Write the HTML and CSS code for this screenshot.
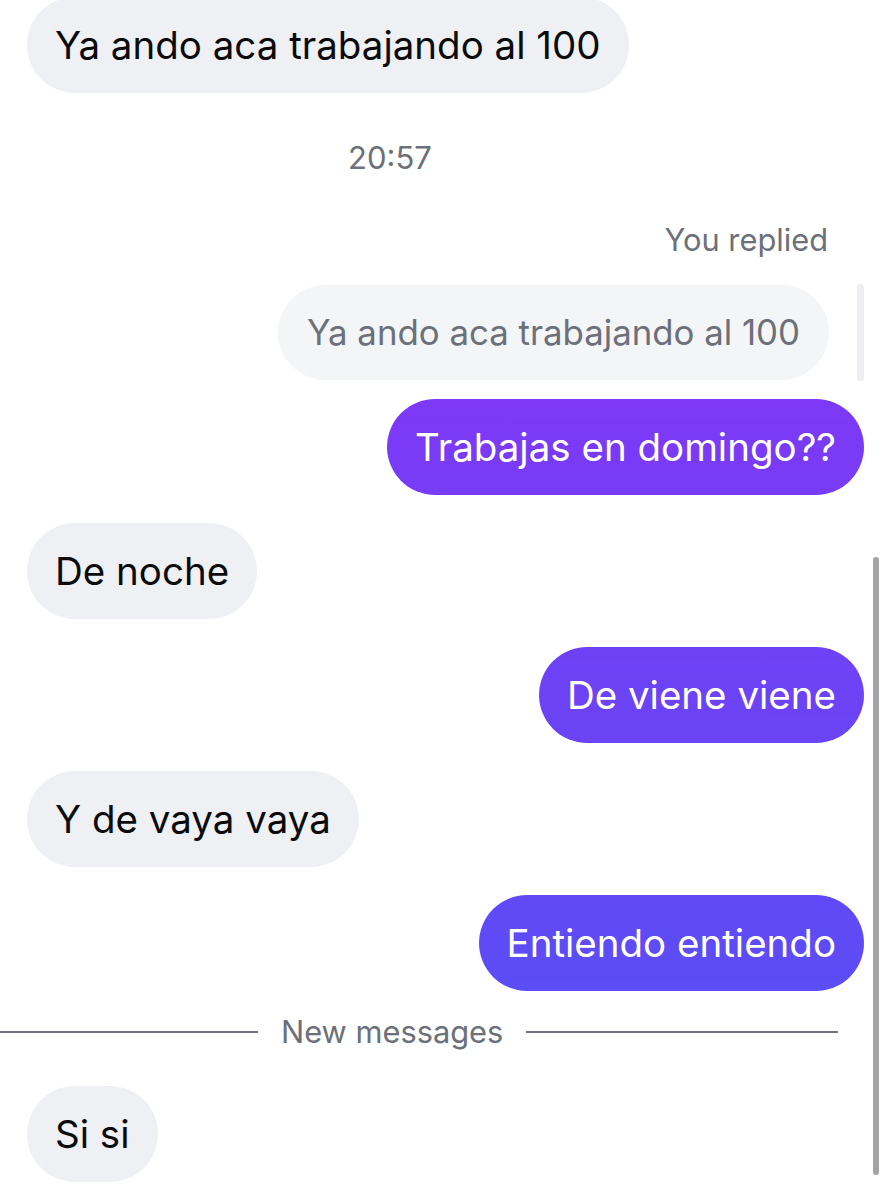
FILE: index.html
```html
<!DOCTYPE html>
<html lang="en">
<head>
    <meta charset="UTF-8">
    <meta name="viewport" content="width=device-width, initial-scale=1.0">
    <title>Chat</title>
    <link rel="stylesheet" href="styles.css">
</head>
<body>
    <div class="thread">
        <div class="row left first">
            <div class="bubble in">Ya ando aca trabajando al 100</div>
        </div>

        <div class="time">20:57</div>

        <div class="replied">You replied</div>
        <div class="row right quote-row">
            <div class="bubble quote">Ya ando aca trabajando al 100</div>
            <div class="quote-bar"></div>
        </div>
        <div class="row right tight">
            <div class="bubble out">Trabajas en domingo??</div>
        </div>

        <div class="row left">
            <div class="bubble in">De noche</div>
        </div>
        <div class="row right">
            <div class="bubble out">De viene viene</div>
        </div>
        <div class="row left">
            <div class="bubble in">Y de vaya vaya</div>
        </div>
        <div class="row right">
            <div class="bubble out">Entiendo entiendo</div>
        </div>

        <div class="divider">
            <span class="line short"></span>
            <span class="label">New messages</span>
            <span class="line"></span>
        </div>

        <div class="row left last">
            <div class="bubble in">Si si</div>
        </div>
    </div>

    <div class="scrollbar"></div>
</body>
</html>
```

FILE: styles.css
```css
body {
    margin: 0;
    background: #fff;
    font-family: Inter, "Noto Sans", sans-serif;
    color: #0b0b0c;
    overflow: hidden;
}
.thread {
    display: flex;
    flex-direction: column;
    padding: 0 20px 0 27px;
}
.row {
    display: flex;
    margin-top: 28px;
}
.row.left {
    justify-content: flex-start;
}
.row.right {
    justify-content: flex-end;
}
.row.first {
    margin-top: -3px;
}
.row.tight {
    margin-top: 19px;
}
.bubble {
    font-size: 38.5px;
    line-height: 44px;
    padding: 26px 28px;
    border-radius: 48px;
    white-space: nowrap;
}
.bubble.in {
    background: #eef0f3;
}
.bubble.out {
    color: #fff;
    background: linear-gradient(to bottom, #932bf6 0%, #5054f5 100%);
    background-attachment: fixed;
}
.quote-row {
    align-items: stretch;
    gap: 28px;
}
.bubble.quote {
    background: #f4f5f7;
    color: #6c7079;
    font-size: 34.8px;
    line-height: 43px;
    padding: 26px 29px;
}
.quote-bar {
    width: 7px;
    border-radius: 4px;
    background: #eceef1;
    margin: -1px 0;
}
.time {
    margin: 48px 111px 0 0;
    text-align: center;
    font-size: 31px;
    line-height: 34px;
    color: #6b7079;
}
.replied {
    margin-top: 48px;
    text-align: right;
    font-size: 30.8px;
    line-height: 34px;
    color: #6b7079;
    margin-right: 36px;
}
.divider {
    display: flex;
    align-items: center;
    margin: 24px 26px 0 -27px;
    gap: 23px;
    height: 34px;
}
.divider .line {
    flex: 1;
    height: 2px;
    background: #6e737b;
}
.divider .line.short {
    flex: 0 0 258px;
}
.divider .label {
    font-size: 30.8px;
    line-height: 34px;
    color: #6b7079;
}
.row.last {
    margin-top: 37px;
}
.scrollbar {
    position: absolute;
    left: 873px;
    top: 557px;
    width: 6px;
    height: 618px;
    border-radius: 3px;
    background: #a3a3a5;
}
```
